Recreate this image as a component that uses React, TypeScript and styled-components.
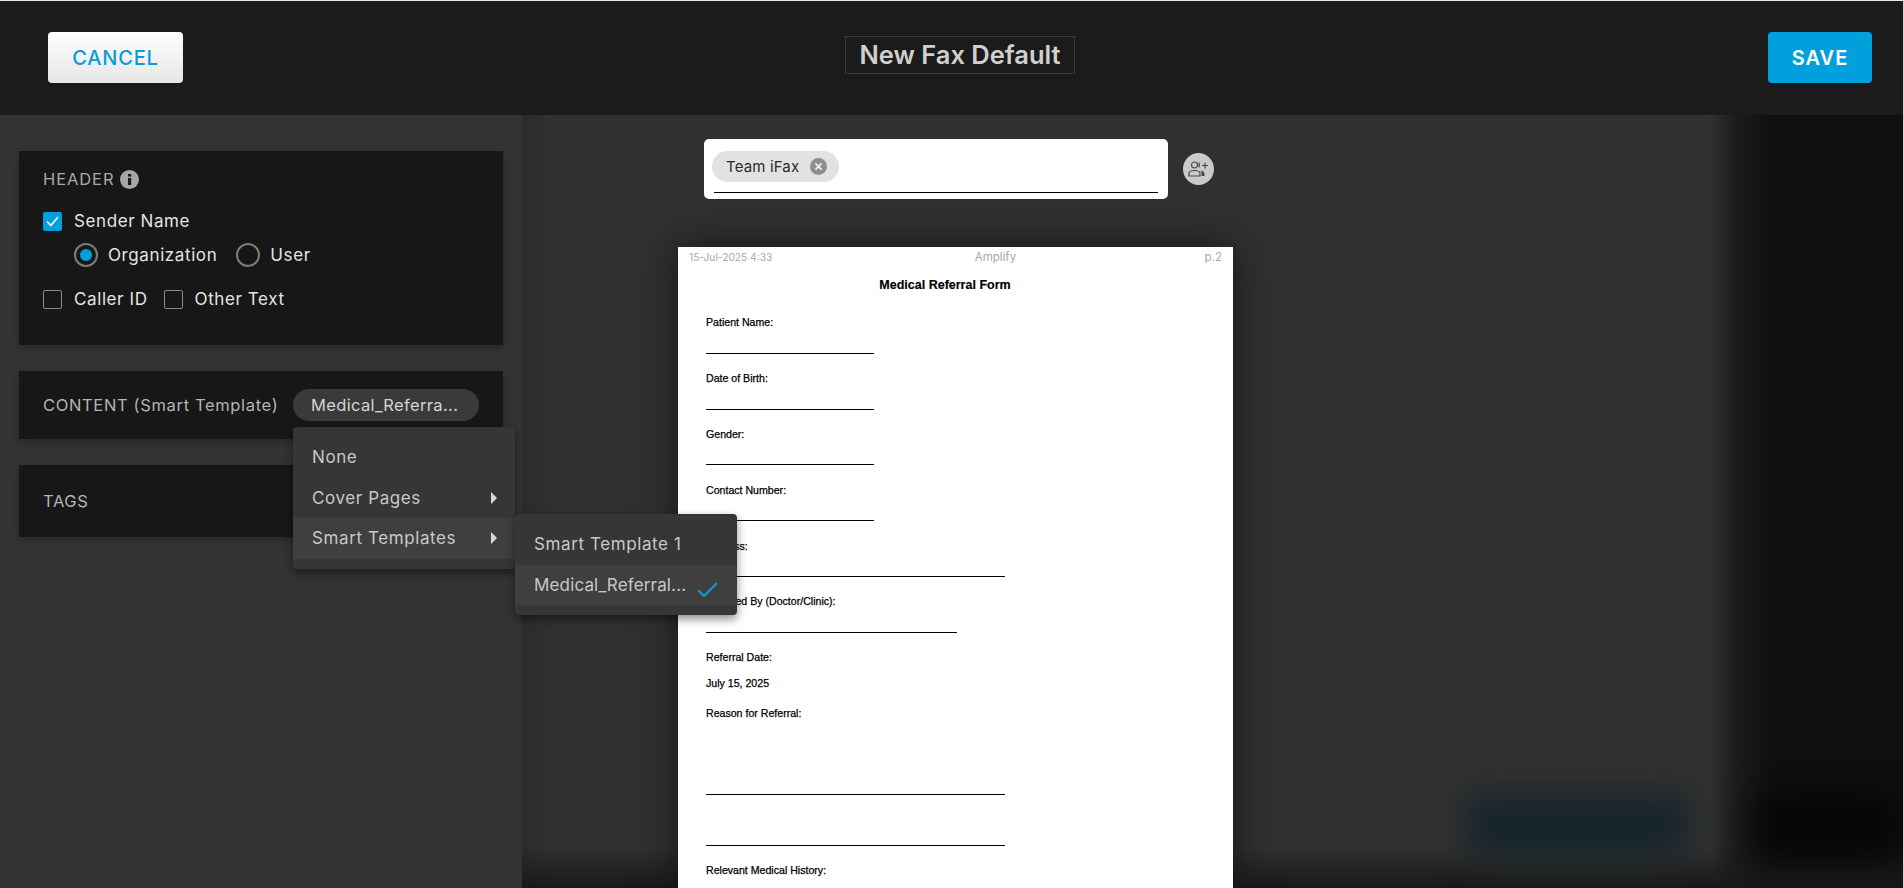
import styled, { createGlobalStyle } from "styled-components";

const GlobalStyle = createGlobalStyle`
    html, body, #root {
        height: 100%;
        margin: 0;
        overflow: hidden;
    }
    body {
        font-family: Inter, "Open Sans", sans-serif;
        background-color: #333;
    }
    * {
        box-sizing: border-box;
    }
`;

const Frame = styled.div`
    height: 100vh;
    display: flex;
    flex-direction: column;
    border-top: 1px solid #e8e8e8;
`;
const TopBar = styled.header`
    height: 114px;
    flex: none;
    display: grid;
    grid-template-columns: 1fr auto 1fr;
    align-items: center;
    padding: 0 31px 2px 48px;
    background-color: #1b1b1b;
`;
const CancelButton = styled.button`
    justify-self: start;
    width: 135px;
    height: 51px;
    padding-top: 2px;
    border: 0;
    border-radius: 4px;
    background: linear-gradient(#fff, #e6e6e6);
    color: #0a9cd8;
    font-family: inherit;
    font-size: 20px;
    font-weight: 500;
    letter-spacing: 0.8px;
`;
const SaveButton = styled.button`
    justify-self: end;
    width: 104px;
    height: 51px;
    padding-top: 2px;
    border: 0;
    border-radius: 4px;
    background-color: #00a0dc;
    color: #fff;
    font-family: inherit;
    font-size: 20px;
    font-weight: 600;
    letter-spacing: 1px;
`;
const Title = styled.h1`
    margin: 0 0 4px;
    width: 230px;
    height: 38px;
    border: 1px solid #3b3b3b;
    color: #cfcfcf;
    font-size: 25.5px;
    font-weight: 600;
    line-height: 35px;
    text-align: center;
    white-space: nowrap;
`;

const Workspace = styled.main`
    flex: 1;
    min-height: 0;
    display: flex;
`;
const Sidebar = styled.aside`
    width: 522px;
    flex: none;
    display: flex;
    flex-direction: column;
    gap: 26px;
    padding: 36px 19px;
    background-color: #333;
`;
const Card = styled.section<{ $height: number }>`
    height: ${(p) => p.$height}px;
    display: flex;
    align-items: center;
    padding: 0 24px;
    background-color: #171717;
    box-shadow: 0 3px 8px rgba(0, 0, 0, 0.25);
`;
const HeaderCard = styled(Card)`
    flex-direction: column;
    align-items: flex-start;
    padding-top: 17px;
`;
const CardTitle = styled.h2`
    margin: 0;
    color: #a8a8a8;
    font-size: 16.5px;
    font-weight: 400;
    letter-spacing: 0.9px;
    line-height: 22px;
    display: flex;
    align-items: center;
    gap: 6px;
`;
const OptionRow = styled.div<{ $indent?: number; $top: number; $gap?: number }>`
    display: flex;
    align-items: center;
    gap: ${(p) => p.$gap ?? 0}px;
    margin-top: ${(p) => p.$top}px;
    margin-left: ${(p) => p.$indent ?? 0}px;
`;
const Option = styled.label`
    display: flex;
    align-items: center;
    gap: 12px;
    color: #e4e4e4;
    font-size: 17px;
    letter-spacing: 0.6px;
    line-height: 24px;
`;
const RadioOption = styled(Option)`
    gap: 10px;
`;
const Box = styled.span<{ $checked?: boolean }>`
    width: 19px;
    height: 19px;
    display: flex;
    align-items: center;
    justify-content: center;
    border: ${(p) => (p.$checked ? "0" : "1.5px solid #8a8a8a")};
    border-radius: 2px;
    background-color: ${(p) => (p.$checked ? "#00a0dc" : "transparent")};
`;
const Radio = styled.span<{ $checked?: boolean }>`
    width: 24px;
    height: 24px;
    display: flex;
    align-items: center;
    justify-content: center;
    border: 2px solid #7c7c7c;
    border-radius: 50%;
    &::after {
        content: "";
        display: ${(p) => (p.$checked ? "block" : "none")};
        width: 12px;
        height: 12px;
        border-radius: 50%;
        background-color: #00a0dc;
    }
`;

const ContentLabel = styled.span`
    color: #b4b4b4;
    font-size: 16.5px;
    letter-spacing: 0.65px;
    white-space: nowrap;
`;
const TemplatePicker = styled.div`
    position: relative;
    margin-left: auto;
`;
const TemplatePill = styled.div`
    width: 186px;
    height: 32px;
    padding-left: 18px;
    border-radius: 16px;
    background-color: #3a3a3a;
    color: #d4d4d4;
    font-size: 16.5px;
    letter-spacing: 0.35px;
    line-height: 32px;
`;
const Menu = styled.ul`
    position: absolute;
    top: 38px;
    left: 0;
    z-index: 5;
    width: 222px;
    margin: 0;
    padding: 10px 0;
    list-style: none;
    border-radius: 4px;
    background-color: #363636;
    box-shadow: 0 4px 10px rgba(0, 0, 0, 0.45);
`;
const SubMenu = styled(Menu)`
    top: -4px;
    left: 100%;
`;
const MenuItem = styled.li<{ $active?: boolean }>`
    position: relative;
    height: 40.5px;
    display: flex;
    align-items: center;
    justify-content: space-between;
    padding: 0 19px;
    background-color: ${(p) => (p.$active ? "#3f3f3f" : "transparent")};
    color: #c8c8c8;
    font-size: 17px;
    letter-spacing: 0.6px;
    white-space: nowrap;
`;
const TightName = styled.span`
    letter-spacing: 0.15px;
`;
const Arrow = styled.span`
    width: 0;
    height: 0;
    border-top: 6px solid transparent;
    border-bottom: 6px solid transparent;
    border-left: 6px solid #d8d8d8;
    margin-right: -1px;
`;
const Tick = styled.svg`
    position: absolute;
    right: 19px;
    top: 17px;
    width: 21px;
    height: 15px;
`;

const Preview = styled.div`
    position: relative;
    flex: 1;
    min-width: 0;
    overflow: hidden;
    padding-left: 156px;
    background: linear-gradient(to top, #191919 0, rgba(25, 25, 25, 0) 40px),
        linear-gradient(to right, #2b2b2b 0, #303030 30px, #303030 1188px, #1b1b1b 1215px, #0f0f0f 1250px);
`;
const Blur = styled.div<{ $left: number; $width: number; $color: string }>`
    position: absolute;
    left: ${(p) => p.$left}px;
    width: ${(p) => p.$width}px;
    top: 680px;
    height: 60px;
    background-color: ${(p) => p.$color};
    filter: blur(16px);
`;
const PreviewColumn = styled.div`
    position: relative;
    width: 555px;
    height: 100%;
    display: flex;
    flex-direction: column;
    padding-top: 24px;
`;
const RecipientRow = styled.div`
    display: flex;
    align-items: center;
    gap: 15px;
    margin-left: 26px;
`;
const RecipientBox = styled.div`
    width: 464px;
    height: 60px;
    padding: 12px 10px 0;
    border-radius: 5px;
    background-color: #fff;
`;
const RecipientField = styled.div`
    height: 42px;
    border-bottom: 1px solid #000;
`;
const Chip = styled.span`
    width: 127px;
    height: 31px;
    margin-left: -2px;
    display: flex;
    align-items: center;
    justify-content: space-between;
    padding: 0 12px 0 14px;
    border-radius: 16px;
    background-color: #e2e2e2;
    color: #2b2b2b;
    font-size: 15px;
    letter-spacing: 0.15px;
`;
const AddButton = styled.span`
    width: 31px;
    height: 32px;
    display: flex;
    align-items: center;
    justify-content: center;
    border-radius: 50%;
    background-color: #cacaca;
`;
const Sheet = styled.article`
    flex: 1;
    min-height: 0;
    margin-top: 48px;
    padding: 0 11px 0 28px;
    overflow: hidden;
    background-color: #fff;
    box-shadow: 0 0 36px rgba(0, 0, 0, 0.55);
    font-family: "Liberation Sans", Arial, sans-serif;
    color: #000;
`;
const SheetHead = styled.div`
    display: flex;
    justify-content: space-between;
    height: 20px;
    margin-left: -17px;
    color: #a9a9a9;
    font-family: Inter, sans-serif;
    font-size: 11.5px;
    line-height: 20px;
`;
const Stamp = styled.span`
    font-size: 10.2px;
`;
const Source = styled.span`
    margin-left: 14px;
`;
const SheetTitle = styled.h3`
    margin: 10px 0 0;
    padding-right: 38px;
    font-size: 12.5px;
    font-weight: 700;
    line-height: 16px;
    text-align: center;
    -webkit-text-stroke: 0.15px #000;
`;
const Line = styled.p<{ $top: number }>`
    margin: ${(p) => p.$top}px 0 0;
    font-size: 10.6px;
    line-height: 14px;
    -webkit-text-stroke: 0.25px #000;
`;
const Rule = styled.div<{ $width: number; $top: number }>`
    width: ${(p) => p.$width}px;
    height: 1px;
    margin-top: ${(p) => p.$top}px;
    background-color: #000;
`;

const form: ({ text: string; top: number } | { width: number; top: number })[] = [
    { text: "Patient Name:", top: 22 },
    { width: 168, top: 24 },
    { text: "Date of Birth:", top: 17 },
    { width: 168, top: 24 },
    { text: "Gender:", top: 17 },
    { width: 168, top: 23 },
    { text: "Contact Number:", top: 18 },
    { width: 168, top: 23 },
    { text: "Address:", top: 18 },
    { width: 299, top: 23 },
    { text: "Referred By (Doctor/Clinic):", top: 17 },
    { width: 251, top: 24 },
    { text: "Referral Date:", top: 17 },
    { text: "July 15, 2025", top: 12 },
    { text: "Reason for Referral:", top: 16 },
    { width: 299, top: 74 },
    { width: 299, top: 50 },
    { text: "Relevant Medical History:", top: 17 },
];

function CheckMark() {
    return (
        <svg width="13" height="11" viewBox="0 0 13 11" fill="none">
            <path d="M1 5.5 L4.8 9.5 L12 1" stroke="#fff" strokeWidth="1.6" />
        </svg>
    );
}

function InfoIcon() {
    return (
        <svg width="19" height="19" viewBox="0 0 19 19">
            <circle cx="9.5" cy="9.5" r="9.5" fill="#a6a6a6" />
            <rect x="8" y="8" width="3.2" height="7" fill="#1a1a1a" />
            <rect x="8" y="4" width="3.2" height="2.6" fill="#1a1a1a" />
        </svg>
    );
}

function CloseIcon() {
    return (
        <svg width="17" height="17" viewBox="0 0 17 17">
            <circle cx="8.5" cy="8.5" r="8.5" fill="#8e8e8e" />
            <path d="M5.4 5.4 L11.6 11.6 M11.6 5.4 L5.4 11.6" stroke="#eee" strokeWidth="1.8" />
        </svg>
    );
}

function AddRecipientIcon() {
    return (
        <svg width="21" height="16" viewBox="0 0 21 16" fill="none">
            <circle cx="6.5" cy="4" r="3" stroke="#4a4a4a" strokeWidth="1.2" />
            <path d="M1 15 V12.5 C1 10.5 3 9.5 6.5 9.5 C10 9.5 12 10.5 12 12.5 V15 Z" stroke="#4a4a4a" strokeWidth="1.2" />
            <path d="M10.5 1.2 C12.5 1.6 12.5 6.4 10.5 6.8 Z" fill="#4a4a4a" />
            <path d="M12.5 9.5 C15 9.8 16.5 11 16.5 13 V15 H13.5 V12.5 C13.5 11.2 13.2 10.3 12.5 9.5 Z" fill="#4a4a4a" />
            <path d="M14 4.5 H20 M17 1.5 V7.5" stroke="#4a4a4a" strokeWidth="1.2" />
        </svg>
    );
}

export default function App() {
    return (
        <>
            <GlobalStyle />
            <Frame>
                <TopBar>
                    <CancelButton type="button">CANCEL</CancelButton>
                    <Title>New Fax Default</Title>
                    <SaveButton type="button">SAVE</SaveButton>
                </TopBar>
                <Workspace>
                    <Sidebar>
                        <HeaderCard $height={194}>
                            <CardTitle>
                                HEADER <InfoIcon />
                            </CardTitle>
                            <OptionRow $top={19} $indent={0}>
                                <Option>
                                    <Box $checked>
                                        <CheckMark />
                                    </Box>
                                    Sender Name
                                </Option>
                            </OptionRow>
                            <OptionRow $top={10} $indent={31} $gap={19}>
                                <RadioOption>
                                    <Radio $checked />
                                    Organization
                                </RadioOption>
                                <RadioOption>
                                    <Radio />
                                    User
                                </RadioOption>
                            </OptionRow>
                            <OptionRow $top={20} $gap={16}>
                                <Option>
                                    <Box />
                                    Caller ID
                                </Option>
                                <Option>
                                    <Box />
                                    Other Text
                                </Option>
                            </OptionRow>
                        </HeaderCard>
                        <Card $height={68}>
                            <ContentLabel>CONTENT (Smart Template)</ContentLabel>
                            <TemplatePicker>
                                <TemplatePill>Medical_Referra...</TemplatePill>
                                <Menu>
                                    <MenuItem>None</MenuItem>
                                    <MenuItem>
                                        Cover Pages <Arrow />
                                    </MenuItem>
                                    <MenuItem $active>
                                        Smart Templates <Arrow />
                                        <SubMenu>
                                            <MenuItem>Smart Template 1</MenuItem>
                                            <MenuItem $active>
                                                <TightName>Medical_Referral...</TightName>
                                                <Tick viewBox="0 0 21 15" fill="none">
                                                    <path d="M1 8 L7 14 L20 1" stroke="#0a9cd8" strokeWidth="2" />
                                                </Tick>
                                            </MenuItem>
                                        </SubMenu>
                                    </MenuItem>
                                </Menu>
                            </TemplatePicker>
                        </Card>
                        <Card $height={72}>
                            <ContentLabel>TAGS</ContentLabel>
                        </Card>
                    </Sidebar>
                    <Preview>
                        <Blur $left={945} $width={220} $color="#15242c" />
                        <Blur $left={1235} $width={140} $color="#040506" />
                        <PreviewColumn>
                            <RecipientRow>
                                <RecipientBox>
                                    <RecipientField>
                                        <Chip>
                                            Team iFax
                                            <CloseIcon />
                                        </Chip>
                                    </RecipientField>
                                </RecipientBox>
                                <AddButton>
                                    <AddRecipientIcon />
                                </AddButton>
                            </RecipientRow>
                            <Sheet>
                                <SheetHead>
                                    <Stamp>15-Jul-2025 4:33</Stamp>
                                    <Source>Amplify</Source>
                                    <span>p.2</span>
                                </SheetHead>
                                <SheetTitle>Medical Referral Form</SheetTitle>
                                {form.map((row, index) =>
                                    "text" in row ? (
                                        <Line key={index} $top={row.top}>
                                            {row.text}
                                        </Line>
                                    ) : (
                                        <Rule key={index} $width={row.width} $top={row.top} />
                                    ),
                                )}
                            </Sheet>
                        </PreviewColumn>
                    </Preview>
                </Workspace>
            </Frame>
        </>
    );
}
